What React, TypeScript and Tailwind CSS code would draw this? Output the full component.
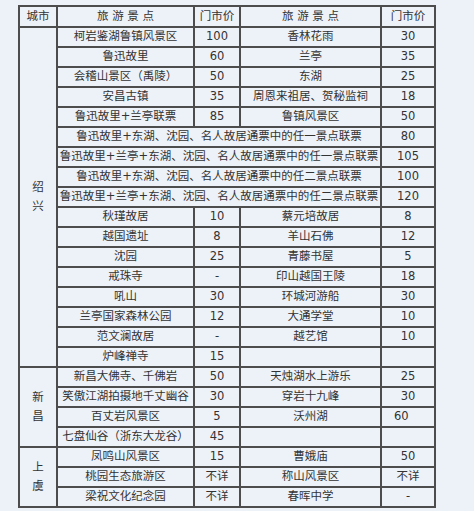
import React from 'react';

type Cell = { text: string; left?: boolean };
type Row =
  | { kind: 'pair'; a: string; ap: string; b: string; bp: string | Cell }
  | { kind: 'wide'; name: string; price: string };

interface City {
  name: string[];
  rows: Row[];
}

const pair = (a: string, ap: string, b: string, bp: string | Cell): Row => ({ kind: 'pair', a, ap, b, bp });
const wide = (name: string, price: string): Row => ({ kind: 'wide', name, price });

const cities: City[] = [
  {
    name: ['绍', '兴'],
    rows: [
      pair('柯岩鉴湖鲁镇风景区', '100', '香林花雨', '30'),
      pair('鲁迅故里', '60', '兰亭', '35'),
      pair('会稽山景区（禹陵）', '50', '东湖', '25'),
      pair('安昌古镇', '35', '周恩来祖居、贺秘监祠', '18'),
      pair('鲁迅故里+兰亭联票', '85', '鲁镇风景区', '50'),
      wide('鲁迅故里+东湖、沈园、名人故居通票中的任一景点联票', '80'),
      wide('鲁迅故里+兰亭+东湖、沈园、名人故居通票中的任一景点联票', '105'),
      wide('鲁迅故里+东湖、沈园、名人故居通票中的任二景点联票', '100'),
      wide('鲁迅故里+兰亭+东湖、沈园、名人故居通票中的任二景点联票', '120'),
      pair('秋瑾故居', '10', '蔡元培故居', '8'),
      pair('越国遗址', '8', '羊山石佛', '12'),
      pair('沈园', '25', '青藤书屋', '5'),
      pair('戒珠寺', '-', '印山越国王陵', '18'),
      pair('吼山', '30', '环城河游船', '30'),
      pair('兰亭国家森林公园', '12', '大通学堂', '10'),
      pair('范文澜故居', '-', '越艺馆', '10'),
      pair('炉峰禅寺', '15', '', ''),
    ],
  },
  {
    name: ['新', '昌'],
    rows: [
      pair('新昌大佛寺、千佛岩', '50', '天烛湖水上游乐', '25'),
      pair('笑傲江湖拍摄地千丈幽谷', '30', '穿岩十九峰', '30'),
      pair('百丈岩风景区', '5', '沃州湖', { text: '60', left: true }),
      pair('七盘仙谷（浙东大龙谷）', '45', '', ''),
    ],
  },
  {
    name: ['上', '虞'],
    rows: [
      pair('凤鸣山风景区', '15', '曹娥庙', '50'),
      pair('桃园生态旅游区', '不详', '称山风景区', '不详'),
      pair('梁祝文化纪念园', '不详', '春晖中学', '-'),
    ],
  },
];

const td = 'border-2 border-[#4d4d4d] text-center whitespace-nowrap p-0';

export default function App() {
  return (
    <div
      className="w-[474px] h-[511px] bg-[#edf2f9] pt-[5px] pl-[18px] text-[#333] text-[11.5px] leading-none overflow-hidden"
      style={{ fontFamily: '"DejaVu Sans", "Noto Sans CJK SC", sans-serif' }}
    >
      <table className="table-fixed border-collapse w-[416px]">
        <colgroup>
          <col className="w-[38px]" />
          <col className="w-[137px]" />
          <col className="w-[46px]" />
          <col className="w-[141px]" />
          <col className="w-[54px]" />
        </colgroup>
        <tbody>
          <tr className="h-[21px]">
            <td className={td}>城市</td>
            <td className={td}>旅 游 景 点</td>
            <td className={td}>门市价</td>
            <td className={td}>旅 游 景 点</td>
            <td className={td}>门市价</td>
          </tr>
          {cities.map(city =>
            city.rows.map((row, i) => (
              <tr key={city.name.join('') + i} className="h-[20px]">
                {i === 0 && (
                  <td rowSpan={city.rows.length} className={`${td} leading-[19px]`}>
                    {city.name[0]}
                    <br />
                    {city.name[1]}
                  </td>
                )}
                {row.kind === 'wide' ? (
                  <>
                    <td colSpan={3} className={td}>{row.name}</td>
                    <td className={td}>{row.price}</td>
                  </>
                ) : (
                  <>
                    <td className={td}>{row.a}</td>
                    <td className={td}>{row.ap}</td>
                    <td className={td}>{row.b}</td>
                    {typeof row.bp === 'string' ? (
                      <td className={td}>{row.bp}</td>
                    ) : (
                      <td className={`${td} !text-left !pl-[12px]`}>{row.bp.text}</td>
                    )}
                  </>
                )}
              </tr>
            ))
          )}
        </tbody>
      </table>
    </div>
  );
}
